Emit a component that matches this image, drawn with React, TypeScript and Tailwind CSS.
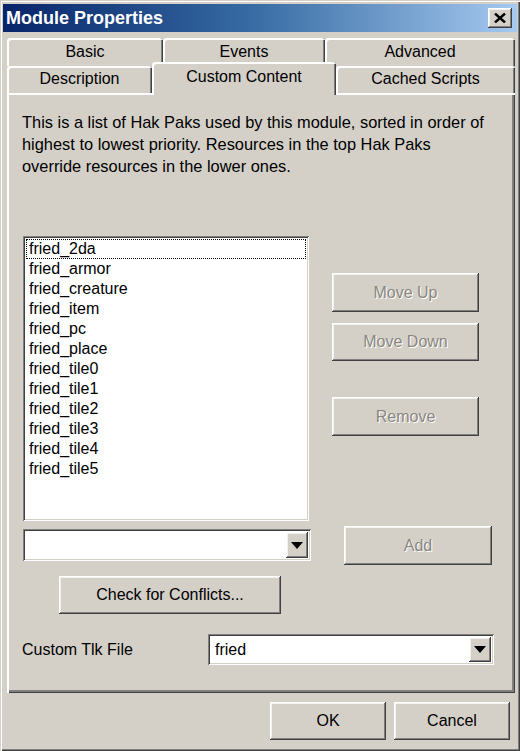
import React from "react";

const raised =
  "shadow-[inset_-1px_-1px_0_#404040,inset_1px_1px_0_#ffffff,inset_-2px_-2px_0_#808080,inset_2px_2px_0_#f4f2ee]";
const sunken =
  "shadow-[inset_1px_1px_0_#808080,inset_-1px_-1px_0_#ffffff,inset_2px_2px_0_#404040,inset_-2px_-2px_0_#d4d0c8]";

function Arrow() {
  return (
    <svg width="12" height="7" viewBox="0 0 12 7">
      <polygon points="0,0 12,0 6,7" fill="#000" />
    </svg>
  );
}

function Combo({ w, h, value }: { w: string; h: string; value?: string }) {
  return (
    <div className={`${w} ${h} bg-white ${sunken} p-[3px] flex items-stretch`}>
      <div className="flex-1 flex items-center pl-[4px] text-[16px]">{value}</div>
      <div className={`w-[22px] bg-[#d4d0c8] ${raised} flex items-center justify-center`}>
        <Arrow />
      </div>
    </div>
  );
}

function Btn({
  w,
  h,
  label,
  disabled,
}: {
  w: string;
  h: string;
  label: string;
  disabled?: boolean;
}) {
  return (
    <div
      className={`${w} ${h} ${raised} bg-[#d4d0c8] flex items-center justify-center text-[16px] ${
        disabled ? "text-[#8a8780] [text-shadow:1px_1px_0_#ffffff]" : "text-black"
      }`}
    >
      {label}
    </div>
  );
}

const tabBase =
  "bg-[#d4d0c8] rounded-t-[3px] shadow-[inset_2px_2px_0_#ffffff,inset_-1px_0_0_#404040,inset_-2px_0_0_#808080] flex justify-center text-[16px] leading-[20px]";

export default function App() {
  const items = [
    "fried_2da",
    "fried_armor",
    "fried_creature",
    "fried_item",
    "fried_pc",
    "fried_place",
    "fried_tile0",
    "fried_tile1",
    "fried_tile2",
    "fried_tile3",
    "fried_tile4",
    "fried_tile5",
  ];
  return (
    <div className="w-[520px] h-[751px] overflow-hidden bg-[#d4d0c8] p-[3px] font-['Liberation_Sans',Arial,sans-serif] text-black shadow-[inset_1px_1px_0_#d4d0c8,inset_2px_2px_0_#ffffff,inset_-1px_-1px_0_#404040,inset_-2px_-2px_0_#808080] flex flex-col">
      {/* Title bar */}
      <div className="mt-[1px] h-[28px] flex items-center justify-between pl-[3px] pr-[5px] bg-gradient-to-r from-[#0a246a] via-[#3a6ea5] to-[#a6caf0]">
        <span className="text-white font-bold text-[18px] leading-[22px]">Module Properties</span>
        <div className={`w-[24px] h-[20px] bg-[#d4d0c8] ${raised} flex items-center justify-center`}>
          <svg width="12" height="10" viewBox="0 0 12 10">
            <path d="M1 0.5 L11 9.5 M11 0.5 L1 9.5" stroke="#000" strokeWidth="2.4" />
          </svg>
        </div>
      </div>

      {/* Tabs + panel */}
      <div className="ml-[4px] mt-[6px] w-[508px] flex flex-col">
        <div className="flex h-[28px]">
          <div className={`${tabBase} w-[156px] h-[28px] pt-[4px]`}>Basic</div>
          <div className={`${tabBase} w-[162px] h-[28px] pt-[4px]`}>Events</div>
          <div className={`${tabBase} w-[190px] h-[28px] pt-[4px]`}>Advanced</div>
        </div>
        <div className="flex items-end h-[27px]">
          <div className={`${tabBase} w-[145px] h-[27px] pt-[3px]`}>Description</div>
          <div className={`${tabBase} relative z-10 w-[184px] h-[33px] -mb-[2px] pt-[5px]`}>
            Custom Content
          </div>
          <div className={`${tabBase} w-[179px] h-[27px] pt-[3px]`}>Cached Scripts</div>
        </div>

        <div className="h-[600px] shadow-[inset_2px_2px_0_#ffffff,inset_-1px_-1px_0_#404040,inset_-3px_-3px_0_#808080] flex flex-col">
          <p className="ml-[15px] mt-[18px] text-[16.4px] leading-[22px]">
            This is a list of Hak Paks used by this module, sorted in order of
            <br />
            highest to lowest priority. Resources in the top Hak Paks
            <br />
            override resources in the lower ones.
          </p>

          <div className="mt-[59px] ml-[16px] flex">
            <div className={`w-[286px] h-[285px] bg-white ${sunken} p-[3px] flex flex-col`}>
              {items.map((it, i) => (
                <div
                  key={it}
                  className={`h-[20px] leading-[20px] pl-[3px] text-[16px] ${
                    i === 0 ? "outline outline-1 outline-dotted outline-black -outline-offset-1" : ""
                  }`}
                >
                  {it}
                </div>
              ))}
            </div>
            <div className="ml-[23px] flex flex-col">
              <div className="mt-[37px]">
                <Btn w="w-[147px]" h="h-[39px]" label="Move Up" disabled />
              </div>
              <div className="mt-[11px]">
                <Btn w="w-[147px]" h="h-[38px]" label="Move Down" disabled />
              </div>
              <div className="mt-[36px]">
                <Btn w="w-[147px]" h="h-[39px]" label="Remove" disabled />
              </div>
            </div>
          </div>

          <div className="mt-[5px] ml-[16px] flex items-start">
            <div className="mt-[3px]">
              <Combo w="w-[288px]" h="h-[32px]" />
            </div>
            <div className="ml-[33px]">
              <Btn w="w-[148px]" h="h-[39px]" label="Add" disabled />
            </div>
          </div>

          <div className="mt-[11px] ml-[52px]">
            <Btn w="w-[222px]" h="h-[38px]" label="Check for Conflicts..." />
          </div>

          <div className="mt-[20px] ml-[15px] flex items-center">
            <span className="w-[186px] text-[16px] leading-[20px]">Custom Tlk File</span>
            <Combo w="w-[286px]" h="h-[31px]" value="fried" />
          </div>
        </div>
      </div>

      {/* Bottom buttons */}
      <div className="mt-[9px] pr-[7px] flex justify-end gap-[8px]">
        <Btn w="w-[116px]" h="h-[38px]" label="OK" />
        <Btn w="w-[116px]" h="h-[38px]" label="Cancel" />
      </div>
    </div>
  );
}
